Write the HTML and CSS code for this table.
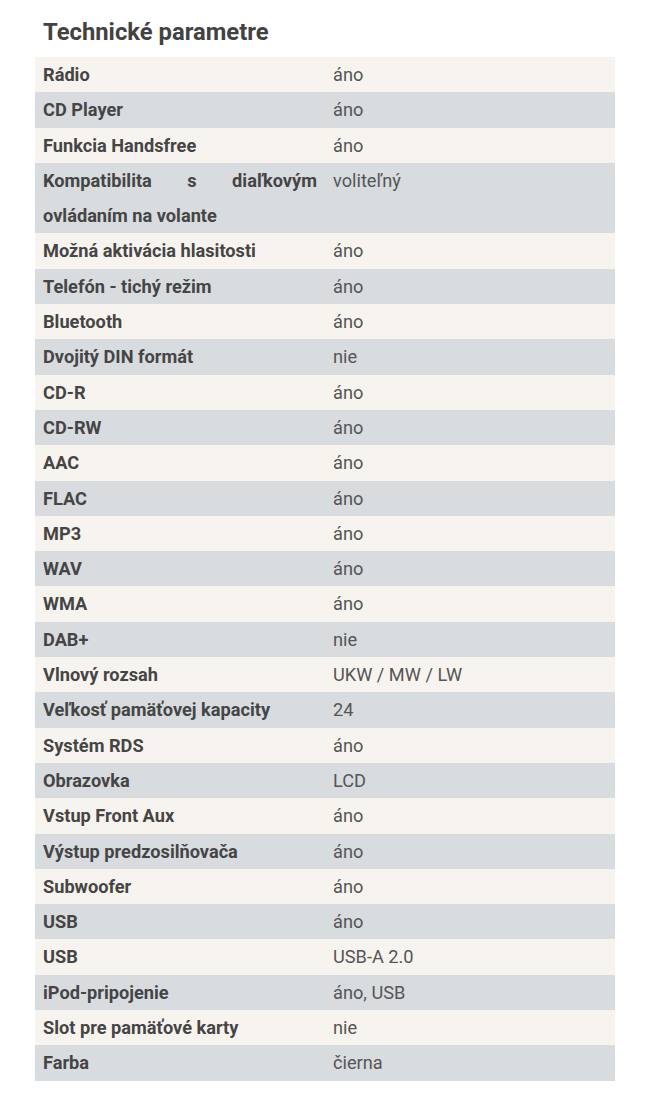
FILE: index.html
```html
<!DOCTYPE html>
<html lang="sk">
<head>
<meta charset="utf-8">
<title>Technické parametre</title>
<link rel="stylesheet" href="styles.css">
</head>
<body>
<section class="params">
  <h2 class="params-title">Technické parametre</h2>
  <table class="params-table">
    <tbody>
      <tr><th>Rádio</th><td>áno</td></tr>
      <tr><th>CD Player</th><td>áno</td></tr>
      <tr><th>Funkcia Handsfree</th><td>áno</td></tr>
      <tr><th>Kompatibilita s diaľkovým ovládaním na volante</th><td>voliteľný</td></tr>
      <tr><th>Možná aktivácia hlasitosti</th><td>áno</td></tr>
      <tr><th>Telefón - tichý režim</th><td>áno</td></tr>
      <tr><th>Bluetooth</th><td>áno</td></tr>
      <tr><th>Dvojitý DIN formát</th><td>nie</td></tr>
      <tr><th>CD-R</th><td>áno</td></tr>
      <tr><th>CD-RW</th><td>áno</td></tr>
      <tr><th>AAC</th><td>áno</td></tr>
      <tr><th>FLAC</th><td>áno</td></tr>
      <tr><th>MP3</th><td>áno</td></tr>
      <tr><th>WAV</th><td>áno</td></tr>
      <tr><th>WMA</th><td>áno</td></tr>
      <tr><th>DAB+</th><td>nie</td></tr>
      <tr><th>Vlnový rozsah</th><td>UKW / MW / LW</td></tr>
      <tr><th>Veľkosť pamäťovej kapacity</th><td>24</td></tr>
      <tr><th>Systém RDS</th><td>áno</td></tr>
      <tr><th>Obrazovka</th><td>LCD</td></tr>
      <tr><th>Vstup Front Aux</th><td>áno</td></tr>
      <tr><th>Výstup predzosilňovača</th><td>áno</td></tr>
      <tr><th>Subwoofer</th><td>áno</td></tr>
      <tr><th>USB</th><td>áno</td></tr>
      <tr><th>USB</th><td>USB-A 2.0</td></tr>
      <tr><th>iPod-pripojenie</th><td>áno, USB</td></tr>
      <tr><th>Slot pre pamäťové karty</th><td>nie</td></tr>
      <tr><th>Farba</th><td>čierna</td></tr>
    </tbody>
  </table>
</section>
</body>
</html>
```
FILE: styles.css
```css
html, body {
  margin: 0;
  padding: 0;
  background: #ffffff;
}
body {
  font-family: Roboto, "Noto Sans", sans-serif;
  color: #444;
}
.params {
  padding: 15px 35px 0 35px;
}
.params-title {
  margin: 0 0 8px 8px;
  font-size: 23.8px;
  font-weight: 700;
  line-height: 34px;
  color: #424242;
}
.params-table {
  width: 580px;
  border-collapse: collapse;
  font-size: 18.2px;
  line-height: 35.3px;
}
.params-table th,
.params-table td {
  padding: 0 8px;
  vertical-align: top;
  width: 50%;
}
.params-table th {
  font-weight: 700;
  text-align: justify;
  color: #454545;
}
.params-table td {
  font-weight: 400;
  text-align: left;
  color: #555;
}
.params-table tr:nth-child(odd) {
  background: #f7f4ef;
}
.params-table tr:nth-child(even) {
  background: #d8dcdf;
}
```
